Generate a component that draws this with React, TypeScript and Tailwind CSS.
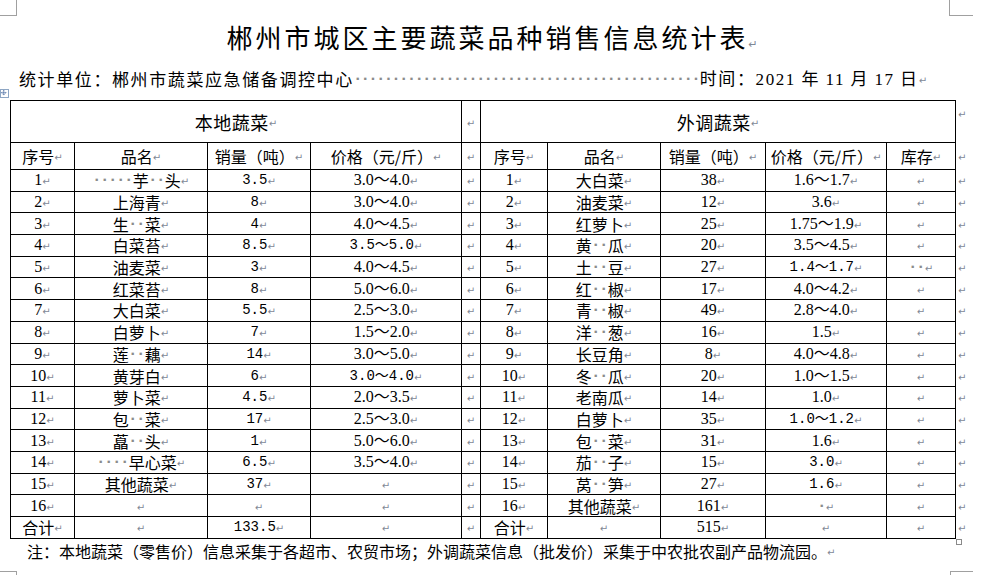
import React from "react";

const cjk = "font-['Noto_Sans_CJK_SC',sans-serif] text-[16px]";
const serif = "font-['Liberation_Serif','Noto_Sans_CJK_SC',serif] text-[16px]";
const mono = "font-['Liberation_Mono','Noto_Sans_CJK_SC',monospace] text-[14px]";

function Ret() {
  return (
    <span className="relative top-[2px] font-['DejaVu_Sans',sans-serif] text-[10px] leading-[20px] text-[#7f8896]">
      ↵
    </span>
  );
}

function Dot({ w = "w-[8px]" }: { w?: string }) {
  return (
    <span className={`inline-block ${w} text-center font-['DejaVu_Sans',sans-serif] text-[13px] font-bold leading-[20px] text-[#8c8c8c]`}>
      ·
    </span>
  );
}

// "s:" = serif digits, "m:" = SimSun-like digits, otherwise Chinese
function Txt({ v }: { v: string }) {
  let font = cjk;
  let s = v;
  if (v.startsWith("s:")) {
    font = serif;
    s = v.slice(2);
  } else if (v.startsWith("m:")) {
    font = mono;
    s = v.slice(2);
  }
  const parts = s.split(/(·)/);
  return (
    <div className="flex h-[20px] items-center justify-center whitespace-nowrap">
      {parts.map((p, i) =>
        p === "·" ? (
          <Dot key={i} />
        ) : p ? (
          <span key={i} className={`${font} leading-[20px]`}>
            {p}
          </span>
        ) : null
      )}
      <Ret />
    </div>
  );
}

const left: string[][] = [
  ["s:1", "·····芋··头", "m:3.5", "s:3.0～4.0"],
  ["s:2", "上海青", "m:8", "s:3.0～4.0"],
  ["s:3", "生··菜", "m:4", "s:4.0～4.5"],
  ["s:4", "白菜苔", "m:8.5", "m:3.5～5.0"],
  ["s:5", "油麦菜", "m:3", "s:4.0～4.5"],
  ["s:6", "红菜苔", "m:8", "s:5.0～6.0"],
  ["s:7", "大白菜", "m:5.5", "s:2.5～3.0"],
  ["s:8", "白萝卜", "m:7", "s:1.5～2.0"],
  ["s:9", "莲··藕", "m:14", "s:3.0～5.0"],
  ["s:10", "黄芽白", "m:6", "m:3.0～4.0"],
  ["s:11", "萝卜菜", "m:4.5", "s:2.0～3.5"],
  ["s:12", "包··菜", "m:17", "s:2.5～3.0"],
  ["s:13", "藠··头", "m:1", "s:5.0～6.0"],
  ["s:14", "····早心菜", "m:6.5", "s:3.5～4.0"],
  ["s:15", "其他蔬菜", "m:37", ""],
  ["s:16", "", "", ""],
  ["合计", "", "m:133.5", ""],
];

const right: string[][] = [
  ["s:1", "大白菜", "s:38", "s:1.6～1.7", ""],
  ["s:2", "油麦菜", "s:12", "s:3.6", ""],
  ["s:3", "红萝卜", "s:25", "s:1.75～1.9", ""],
  ["s:4", "黄··瓜", "s:20", "s:3.5～4.5", ""],
  ["s:5", "土··豆", "s:27", "m:1.4～1.7", "··"],
  ["s:6", "红··椒", "s:17", "s:4.0～4.2", ""],
  ["s:7", "青··椒", "s:49", "s:2.8～4.0", ""],
  ["s:8", "洋··葱", "s:16", "s:1.5", ""],
  ["s:9", "长豆角", "s:8", "s:4.0～4.8", ""],
  ["s:10", "冬··瓜", "s:20", "s:1.0～1.5", ""],
  ["s:11", "老南瓜", "s:14", "s:1.0", ""],
  ["s:12", "白萝卜", "s:35", "m:1.0～1.2", ""],
  ["s:13", "包··菜", "s:31", "s:1.6", ""],
  ["s:14", "茄··子", "s:15", "m:3.0", ""],
  ["s:15", "莴··笋", "s:27", "m:1.6", ""],
  ["s:16", "其他蔬菜", "s:161", "·", ""],
  ["合计", "", "s:515", "", ""],
];

const td = "border border-black p-0 text-center align-middle text-black";
const outside = "p-0 pl-[2px] align-middle";

function OutRet({ top = false }: { top?: boolean }) {
  return (
    <td className={`${outside} ${top ? "align-top pt-[2px]" : ""}`}>
      <div className="flex h-[20px] items-center">
        <Ret />
      </div>
    </td>
  );
}

function EmptyCell() {
  return (
    <td className={td}>
      <div className="flex h-[20px] items-center justify-center">
        <Ret />
      </div>
    </td>
  );
}

export default function App() {
  return (
    <div className="relative w-[984px] h-[575px] overflow-hidden bg-white text-black">
      {/* page corner marks */}
      <div className="absolute left-0 top-0 w-[17px] h-[16px] border-r border-b border-[#a0a0a0]" />
      <div className="absolute left-[949px] top-0 w-[24px] h-[16px] border-l border-b border-[#a0a0a0]" />
      <div className="absolute left-0 top-[571px] w-[17px] h-[4px] border-r border-t border-[#a0a0a0]" />
      <div className="absolute left-[950px] top-[571px] w-[23px] h-[4px] border-l border-t border-[#a0a0a0]" />

      {/* table move handle */}
      <div className="absolute left-0 top-[89px] w-[9px] h-[9px] border border-[#8ea6c4] bg-white">
        <svg viewBox="0 0 9 9" className="w-[7px] h-[7px]">
          <path
            d="M3.5 0.5v6M0.5 3.5h6M2.5 1.5l1-1 1 1M2.5 5.5l1 1 1-1M1.5 2.5l-1 1 1 1M5.5 2.5l1 1-1 1"
            stroke="#3a5f9a"
            strokeWidth="0.8"
            fill="none"
          />
        </svg>
      </div>
      {/* table resize handle */}
      <div className="absolute left-[956px] top-[539px] w-[6px] h-[6px] border border-[#8a8a8a] bg-white" />

      <div className="pt-[22px] h-[52px] text-center font-['Noto_Sans_CJK_SC',sans-serif] text-[26px] leading-[30px] tracking-[3px]">
        郴州市城区主要蔬菜品种销售信息统计表
        <span className="font-['DejaVu_Sans',sans-serif] text-[11px] tracking-normal text-[#7f8896]">↵</span>
      </div>

      <div className="mt-[17px] h-[20px] flex items-center pl-[19px] font-['Noto_Sans_CJK_SC',sans-serif] text-[17px] leading-[20px] tracking-[1.6px] whitespace-nowrap">
        <span>统计单位：郴州市蔬菜应急储备调控中心</span>
        <span className="flex tracking-normal">
          {Array.from({ length: 45 }).map((_, i) => (
            <Dot key={i} w="w-[7.7px]" />
          ))}
        </span>
        <span>
          时间：<span className="font-['Liberation_Serif',serif]">2021</span> 年{" "}
          <span className="font-['Liberation_Serif',serif]">11</span> 月{" "}
          <span className="font-['Liberation_Serif',serif]">17</span> 日
        </span>
        <Ret />
      </div>

      <table className="mt-[11px] ml-[10px] w-[974px] table-fixed border-collapse">
        <colgroup>
          <col className="w-[64px]" />
          <col className="w-[133px]" />
          <col className="w-[103px]" />
          <col className="w-[151px]" />
          <col className="w-[19px]" />
          <col className="w-[67px]" />
          <col className="w-[113px]" />
          <col className="w-[105px]" />
          <col className="w-[121px]" />
          <col className="w-[69px]" />
          <col className="w-[29px]" />
        </colgroup>
        <tbody>
          <tr className="h-[42px]">
            <td colSpan={4} className={td}>
              <div className="flex h-[24px] items-center justify-center">
                <span className="font-['Noto_Sans_CJK_SC',sans-serif] text-[18px] leading-[24px] tracking-[0.5px]">本地蔬菜</span>
                <Ret />
              </div>
            </td>
            <EmptyCell />
            <td colSpan={5} className={td}>
              <div className="flex h-[24px] items-center justify-center">
                <span className="font-['Noto_Sans_CJK_SC',sans-serif] text-[18px] leading-[24px] tracking-[0.5px]">外调蔬菜</span>
                <Ret />
              </div>
            </td>
            <OutRet top />
          </tr>
          <tr className="h-[27px]">
            {["序号", "品名", "销量（吨）", "价格（元/斤）"].map((h) => (
              <td key={"l" + h} className={td}>
                <Txt v={h} />
              </td>
            ))}
            <EmptyCell />
            {["序号", "品名", "销量（吨）", "价格（元/斤）", "库存"].map((h) => (
              <td key={"r" + h} className={td}>
                <Txt v={h} />
              </td>
            ))}
            <OutRet />
          </tr>
          {left.map((row, i) => (
            <tr key={i} className="h-[21.7px]">
              {row.map((c, j) => (
                <td key={"l" + j} className={td}>
                  <Txt v={c} />
                </td>
              ))}
              <EmptyCell />
              {right[i].map((c, j) => (
                <td key={"r" + j} className={td}>
                  <Txt v={c} />
                </td>
              ))}
              <OutRet />
            </tr>
          ))}
        </tbody>
      </table>

      <div className="h-[24px] pl-[27px] flex items-center font-['Noto_Sans_CJK_SC',sans-serif] text-[16px] leading-[24px] whitespace-nowrap">
        <span>注：本地蔬菜（零售价）信息采集于各超市、农贸市场；外调蔬菜信息（批发价）采集于中农批农副产品物流园。</span>
        <Ret />
      </div>
    </div>
  );
}
